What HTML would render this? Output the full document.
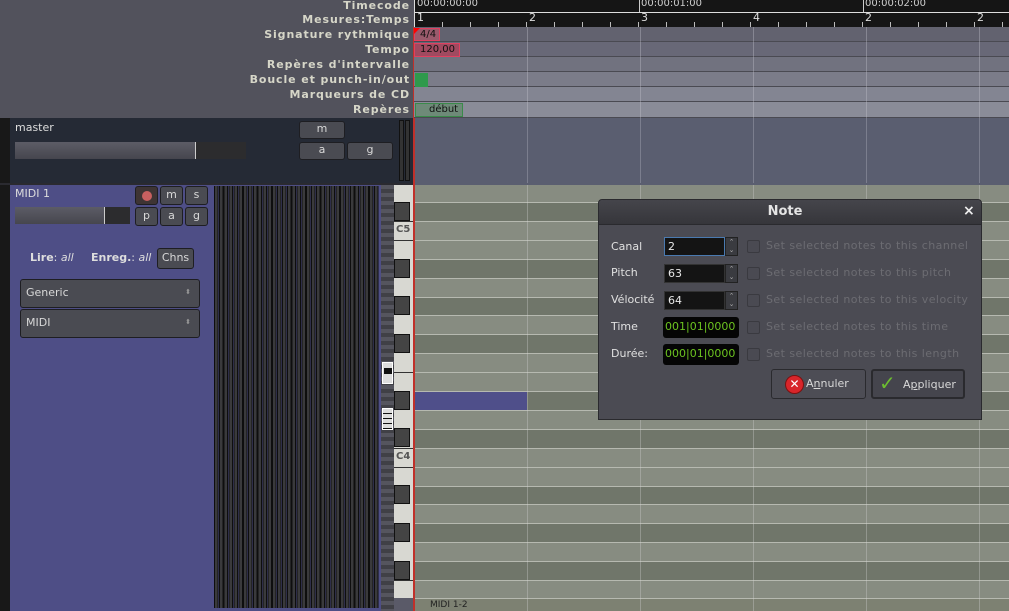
<!DOCTYPE html>
<html><head><meta charset="utf-8"><style>
*{margin:0;padding:0;box-sizing:border-box}
body{width:1009px;height:611px;overflow:hidden;background:#52525c;font-family:"DejaVu Sans","Liberation Sans",sans-serif;position:relative}
.a{position:absolute}
.lbl{position:absolute;right:599px;font-size:11px;font-weight:bold;color:#d6d6c8;letter-spacing:0.9px;text-align:right;white-space:nowrap}
.btn{position:absolute;background:#4a4b52;border:1px solid #1e1e22;border-radius:3px;color:#d8d8d8;font-size:11px;text-align:center}
.row{position:absolute;left:415px;width:594px;border-top:1px solid #b6b9b0}
.L{background:#878c81}.D{background:#70766a}
.bk{position:absolute;left:394px;width:16px;height:19px;background:#444;border:1px solid #111}
.dl{position:absolute;left:611px;font-size:11px;color:#e0e0e0}
.sp{position:absolute;left:664px;width:61px;height:19px;background:#141414;border:1px solid #333;color:#e8e8e8;font-size:11px;padding:2px 0 0 3px}
.spn{position:absolute;left:725px;width:13px;height:19px;background:#3a3b40;border:1px solid #222;color:#aaa;font-size:7px;line-height:8px;text-align:center}
.grn{position:absolute;left:663px;width:76px;height:21px;background:#050505;border-radius:3px;color:#6cc320;font-size:11px;padding:3px 0 0 2px}
.cb{position:absolute;left:747px;width:13px;height:13px;border:1px solid #3a3a40;border-radius:2px;background:#4a4a52}
.ct{position:absolute;left:766px;font-size:11px;color:#6c6c72;white-space:nowrap;letter-spacing:0.45px}
</style></head><body>
<div class="lbl" style="top:-1px">Timecode</div>
<div class="lbl" style="top:13px">Mesures:Temps</div>
<div class="lbl" style="top:28px">Signature rythmique</div>
<div class="lbl" style="top:43px">Tempo</div>
<div class="lbl" style="top:58px">Repères d'intervalle</div>
<div class="lbl" style="top:73px">Boucle et punch-in/out</div>
<div class="lbl" style="top:88px">Marqueurs de CD</div>
<div class="lbl" style="top:103px">Repères</div>
<div class="a" style="left:414px;top:0;width:595px;height:27px;background:#151515"></div>
<div class="a" style="left:414px;top:12px;width:595px;height:1px;background:#ddd"></div>
<div class="a" style="left:414px;top:0;width:1px;height:27px;background:#ddd"></div>
<div class="a" style="left:417px;top:-2px;color:#ccc;font-size:10px">00:00:00:00</div>
<div class="a" style="left:639px;top:0;width:1px;height:12px;background:#ccc"></div>
<div class="a" style="left:641px;top:-2px;color:#ccc;font-size:10px">00:00:01:00</div>
<div class="a" style="left:863px;top:0;width:1px;height:12px;background:#ccc"></div>
<div class="a" style="left:865px;top:-2px;color:#ccc;font-size:10px">00:00:02:00</div>
<div class="a" style="left:417px;top:11px;color:#ddd;font-size:11px">1</div>
<div class="a" style="left:529px;top:11px;color:#ddd;font-size:11px">2</div>
<div class="a" style="left:641px;top:11px;color:#ddd;font-size:11px">3</div>
<div class="a" style="left:753px;top:11px;color:#ddd;font-size:11px">4</div>
<div class="a" style="left:865px;top:11px;color:#ddd;font-size:11px">2</div>
<div class="a" style="left:977px;top:11px;color:#ddd;font-size:11px">2</div>
<div class="a" style="left:415px;top:22px;width:594px;height:5px;background:repeating-linear-gradient(90deg,transparent 0 27px,#bbb 27px 28px)"></div>
<div class="a" style="left:414px;top:27px;width:595px;height:15px;background:#62626f;border-bottom:1px solid #4a4a52"></div>
<div class="a" style="left:414px;top:42px;width:595px;height:15px;background:#686877;border-bottom:1px solid #4a4a52"></div>
<div class="a" style="left:414px;top:57px;width:595px;height:15px;background:#71727f;border-bottom:1px solid #4a4a52"></div>
<div class="a" style="left:414px;top:72px;width:595px;height:15px;background:#7b7c89;border-bottom:1px solid #4a4a52"></div>
<div class="a" style="left:414px;top:87px;width:595px;height:15px;background:#838592;border-bottom:1px solid #4a4a52"></div>
<div class="a" style="left:414px;top:102px;width:595px;height:16px;background:#8a8c98;border-bottom:1px solid #4a4a52"></div>
<div class="a" style="left:415px;top:27px;width:594px;height:91px;background:repeating-linear-gradient(90deg,transparent 0 112px,rgba(200,200,210,.35) 112px 113px)"></div>
<div class="a" style="left:414px;top:28px;width:26px;height:13px;background:#9a5a6c;border:1px solid #e04060;font-size:10px;color:#111;padding-left:5px;line-height:11px">4/4</div>
<div class="a" style="left:414px;top:28px;width:0;height:0;border-top:6px solid #f00;border-right:6px solid transparent"></div>
<div class="a" style="left:414px;top:43px;width:46px;height:14px;background:#a04a60;border:1px solid #e04060;font-size:10px;color:#111;padding-left:5px;line-height:12px">120,00</div>
<div class="a" style="left:415px;top:73px;width:13px;height:14px;background:#2f9a4c"></div>
<div class="a" style="left:415px;top:103px;width:48px;height:14px;background:#6e8a78;border:1px solid #3a8a4a;font-size:10px;color:#111;padding-left:13px;line-height:12px">début</div>
<div class="a" style="left:0;top:118px;width:10px;height:493px;background:#181818"></div>
<div class="a" style="left:10px;top:118px;width:403px;height:65px;background:#252a35"></div>
<div class="a" style="left:415px;top:118px;width:594px;height:65px;background:#5a5e70;background-image:repeating-linear-gradient(90deg,transparent 0 112px,rgba(200,200,210,.3) 112px 113px)"></div>
<div class="a" style="left:15px;top:121px;font-size:11px;color:#ddd">master</div>
<div class="a" style="left:15px;top:142px;width:231px;height:17px;background:#2c2c2e"></div>
<div class="a" style="left:15px;top:142px;width:181px;height:17px;background:linear-gradient(#5c5c66,#46464e);border-right:1px solid #ccc"></div>
<div class="btn" style="left:299px;top:121px;width:46px;height:18px">m</div>
<div class="btn" style="left:299px;top:142px;width:46px;height:18px">a</div>
<div class="btn" style="left:347px;top:142px;width:46px;height:18px">g</div>
<div class="a" style="left:399px;top:120px;width:5px;height:61px;background:#333;border:1px solid #111"></div>
<div class="a" style="left:405px;top:120px;width:5px;height:61px;background:#333;border:1px solid #111"></div>
<div class="a" style="left:10px;top:185px;width:371px;height:426px;background:#4e4e86"></div>
<div class="a" style="left:15px;top:187px;font-size:11px;color:#ddd">MIDI 1</div>
<div class="a" style="left:15px;top:207px;width:115px;height:17px;background:#2c2c2e"></div>
<div class="a" style="left:15px;top:207px;width:90px;height:17px;background:linear-gradient(#5c5c66,#46464e);border-right:1px solid #ccc"></div>
<div class="btn" style="left:135px;top:186px;width:23px;height:19px;background:#3e3434"><div class="a" style="left:6px;top:4px;width:10px;height:10px;border-radius:50%;background:#c86060"></div></div>
<div class="btn" style="left:160px;top:186px;width:23px;height:19px;line-height:16px">m</div>
<div class="btn" style="left:185px;top:186px;width:23px;height:19px;line-height:16px">s</div>
<div class="btn" style="left:135px;top:207px;width:23px;height:19px;line-height:16px">p</div>
<div class="btn" style="left:160px;top:207px;width:23px;height:19px;line-height:16px">a</div>
<div class="btn" style="left:185px;top:207px;width:23px;height:19px;line-height:16px">g</div>
<div class="a" style="left:30px;top:251px;font-size:11px;color:#ddd"><b>Lire</b>: <i>all</i></div>
<div class="a" style="left:91px;top:251px;font-size:11px;color:#ddd"><b>Enreg.</b>: <i>all</i></div>
<div class="btn" style="left:157px;top:248px;width:37px;height:21px;font-size:11px;line-height:18px">Chns</div>
<div class="btn" style="left:20px;top:279px;width:180px;height:29px;text-align:left;padding:6px 0 0 5px;font-size:11px">Generic<span style="position:absolute;right:8px;top:8px;font-size:7px;color:#999">⬍</span></div>
<div class="btn" style="left:20px;top:309px;width:180px;height:29px;text-align:left;padding:6px 0 0 5px;font-size:11px">MIDI<span style="position:absolute;right:8px;top:8px;font-size:7px;color:#999">⬍</span></div>
<div class="a" style="left:214px;top:186px;width:165px;height:422px;background:repeating-linear-gradient(90deg,#0e0e0e 0 1px,#3a3a3c 1px 3.5px,#0e0e0e 3.5px 4.5px,#4e4e86 4.5px 4.85px)"></div>
<div class="a" style="left:381px;top:185px;width:13px;height:426px;background:#55555e;background-image:repeating-linear-gradient(180deg,transparent 0 4px,#404046 4px 8px)"></div>
<div class="a" style="left:382px;top:362px;width:11px;height:22px;background:#ddd;border:1px solid #fff"><div class="a" style="left:1px;top:5px;width:8px;height:6px;background:#111"></div></div>
<div class="a" style="left:382px;top:408px;width:11px;height:22px;background:#ddd;border:1px solid #fff;background-image:repeating-linear-gradient(180deg,transparent 0 4px,#111 4px 5px)"></div>
<div class="a" style="left:394px;top:185px;width:19px;height:413px;background:#d8d8d2"></div>
<div class="row L" style="top:185px;height:17px;border-top:none"></div>
<div class="row D" style="top:202px;height:19px"></div>
<div class="row L" style="top:221px;height:19px"></div>
<div class="row L" style="top:240px;height:19px"></div>
<div class="row D" style="top:259px;height:19px"></div>
<div class="row L" style="top:278px;height:19px"></div>
<div class="row D" style="top:297px;height:18px"></div>
<div class="row L" style="top:315px;height:19px"></div>
<div class="row D" style="top:334px;height:19px"></div>
<div class="row L" style="top:353px;height:19px"></div>
<div class="row L" style="top:372px;height:19px"></div>
<div class="row D" style="top:391px;height:19px"></div>
<div class="row L" style="top:410px;height:19px"></div>
<div class="row D" style="top:429px;height:19px"></div>
<div class="row L" style="top:448px;height:19px"></div>
<div class="row L" style="top:467px;height:19px"></div>
<div class="row D" style="top:486px;height:18px"></div>
<div class="row L" style="top:504px;height:19px"></div>
<div class="row D" style="top:523px;height:19px"></div>
<div class="row L" style="top:542px;height:19px"></div>
<div class="row D" style="top:561px;height:19px"></div>
<div class="row L" style="top:580px;height:19px"></div>
<div class="a" style="left:415px;top:598px;width:594px;height:13px;background:#7d8172;font-size:9px;color:#222;padding-left:15px;line-height:12px;border-top:1px solid #b6b9b0">MIDI 1-2</div>
<div class="a" style="left:415px;top:185px;width:594px;height:426px;background:repeating-linear-gradient(90deg,transparent 0 112px,rgba(210,210,210,.35) 112px 113px)"></div>
<div class="a" style="left:415px;top:392px;width:112px;height:18px;background:#4f4f8a"></div>
<div class="bk" style="top:202px"></div>
<div class="bk" style="top:259px"></div>
<div class="bk" style="top:296px"></div>
<div class="bk" style="top:334px"></div>
<div class="bk" style="top:391px"></div>
<div class="bk" style="top:428px"></div>
<div class="bk" style="top:485px"></div>
<div class="bk" style="top:523px"></div>
<div class="bk" style="top:561px"></div>
<div class="a" style="left:394px;top:221px;width:19px;height:1px;background:#333"></div>
<div class="a" style="left:394px;top:240px;width:19px;height:1px;background:#333"></div>
<div class="a" style="left:394px;top:372px;width:19px;height:1px;background:#333"></div>
<div class="a" style="left:394px;top:448px;width:19px;height:1px;background:#333"></div>
<div class="a" style="left:394px;top:467px;width:19px;height:1px;background:#333"></div>
<div class="a" style="left:394px;top:580px;width:19px;height:1px;background:#333"></div>
<div class="a" style="left:396px;top:224px;font-size:10px;font-weight:bold;color:#555">C5</div>
<div class="a" style="left:396px;top:451px;font-size:10px;font-weight:bold;color:#555">C4</div>
<div class="a" style="left:394px;top:598px;width:19px;height:13px;background:#5a5a68"></div>
<div class="a" style="left:413px;top:118px;width:2px;height:493px;background:#c0302a"></div>
<div class="a" style="left:413px;top:27px;width:1px;height:91px;background:#c0302a"></div>
<div class="a" style="left:0;top:183px;width:413px;height:2px;background:#2a2a30"></div>
<div class="a" style="left:415px;top:183px;width:594px;height:2px;background:#5a5e70"></div>
<div class="a" style="left:598px;top:199px;width:384px;height:221px;background:#4b4b53;border:1px solid #2a2a2e;border-radius:4px 4px 0 0">
 <div class="a" style="left:0;top:0;width:382px;height:25px;background:linear-gradient(#45454b,#36363b);border-bottom:1px solid #2a2a2e;border-radius:4px 4px 0 0"></div>
 <div class="a" style="left:0;top:4px;width:372px;text-align:center;font-size:13px;font-weight:bold;color:#e4e4e4">Note</div>
 <div class="a" style="left:364px;top:3px;font-size:14px;font-weight:bold;color:#eee">×</div>
</div>
<div class="dl" style="top:240px">Canal</div>
<div class="dl" style="top:266px">Pitch</div>
<div class="dl" style="top:293px">Vélocité</div>
<div class="dl" style="top:320px">Time</div>
<div class="dl" style="top:347px">Durée:</div>
<div class="sp" style="top:237px;border-color:#4a7ab0">2</div><div class="spn" style="top:237px">⌃<br>⌄</div>
<div class="sp" style="top:264px">63</div><div class="spn" style="top:264px">⌃<br>⌄</div>
<div class="sp" style="top:291px">64</div><div class="spn" style="top:291px">⌃<br>⌄</div>
<div class="grn" style="top:317px">001|01|0000</div>
<div class="grn" style="top:344px">000|01|0000</div>
<div class="cb" style="top:240px"></div><div class="ct" style="top:239px">Set selected notes to this channel</div>
<div class="cb" style="top:267px"></div><div class="ct" style="top:266px">Set selected notes to this pitch</div>
<div class="cb" style="top:294px"></div><div class="ct" style="top:293px">Set selected notes to this velocity</div>
<div class="cb" style="top:321px"></div><div class="ct" style="top:320px">Set selected notes to this time</div>
<div class="cb" style="top:348px"></div><div class="ct" style="top:347px">Set selected notes to this length</div>
<div class="btn" style="left:771px;top:369px;width:95px;height:30px;font-size:11px;line-height:27px;padding-left:22px;text-align:left;background:#4d4d55;border-color:#2a2a2e">
 <div class="a" style="left:13px;top:5px;width:19px;height:19px;border-radius:50%;background:#d8252a;border:1px solid #7a1010;color:#fff;font-size:12px;line-height:16px;text-align:center;font-weight:bold">✕</div><span style="margin-left:12px">A<u>n</u>nuler</span></div>
<div class="btn" style="left:871px;top:369px;width:94px;height:30px;font-size:11px;line-height:27px;text-align:left;background:#45454d;border:2px solid #2a2a2e">
 <span class="a" style="left:6px;top:-1px;font-size:20px;color:#6cbd30;font-weight:bold">✓</span><span style="margin-left:30px">A<u>p</u>pliquer</span></div>
</body></html>
